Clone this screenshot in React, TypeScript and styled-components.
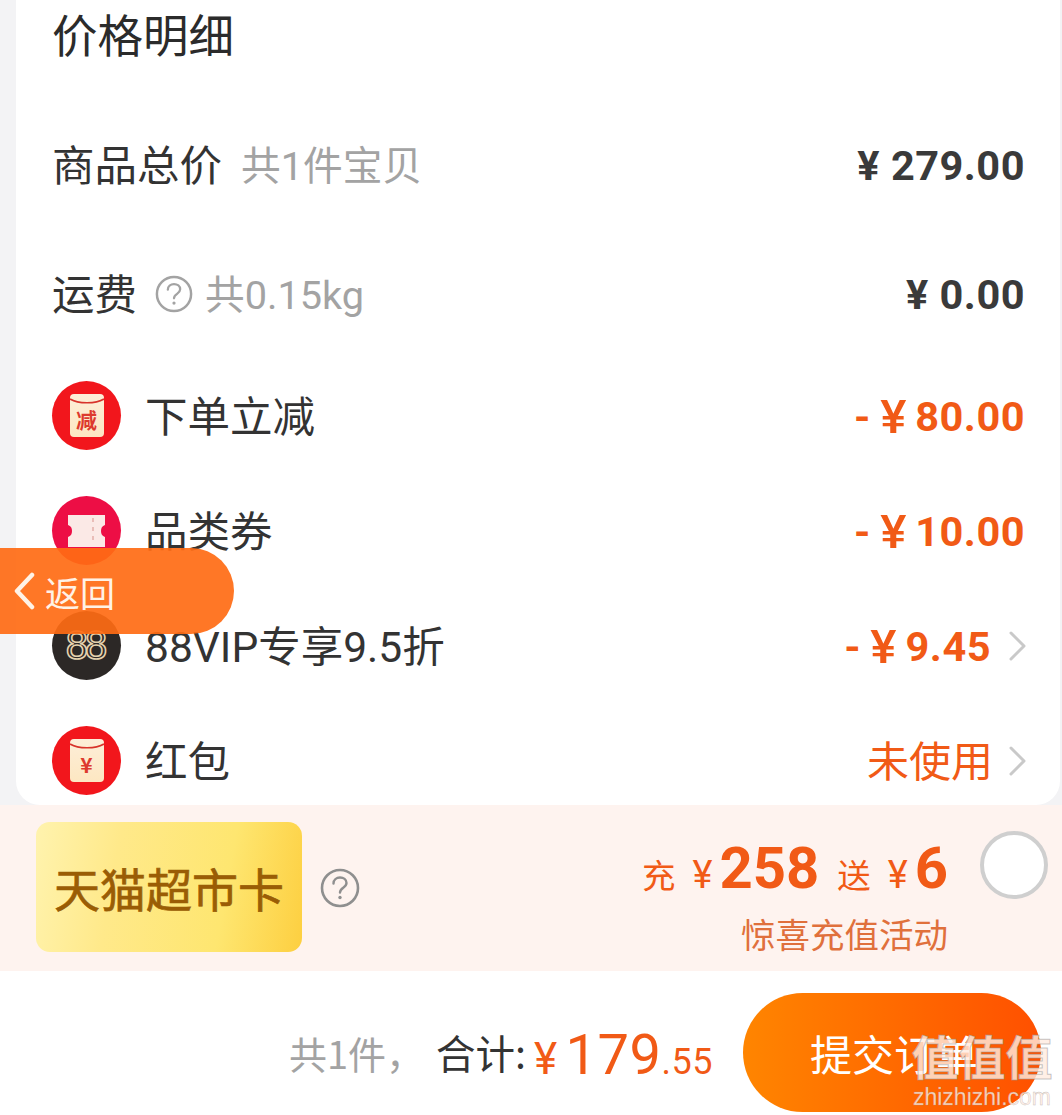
import React from 'react';
import styled, { createGlobalStyle } from 'styled-components';

const CJK = `"Noto Sans CJK SC", "Noto Sans", sans-serif`;
const NUM = `Roboto, "Noto Sans CJK SC", sans-serif`;
const ORANGE = '#f15a16';

const GlobalStyle = createGlobalStyle`
  html, body {
    margin: 0;
    padding: 0;
    background: #f3f3f5;
    font-family: ${CJK};
  }
`;

const Page = styled.div`
  position: relative;
  width: 1062px;
  height: 1115px;
  overflow: hidden;
  display: flex;
  flex-direction: column;
`;

const Card = styled.section`
  height: 805px;
  flex: none;
  margin: 0 2px 0 16px;
  padding: 0 35px 0 36px;
  box-sizing: border-box;
  overflow: hidden;
  background: #fff;
  border-radius: 0 0 24px 24px;
`;

const Title = styled.h2`
  margin: 0 0 30px;
  height: 70px;
  line-height: 66px;
  font-size: 45.5px;
  font-weight: 400;
  color: #2b2b2b;
`;

const Row = styled.div<{ $height: number }>`
  height: ${(p) => p.$height}px;
  display: flex;
  align-items: center;
`;

const Label = styled.span`
  padding-bottom: 6px;
  font-size: 42.5px;
  color: #333;
  white-space: nowrap;
`;

const IconLabel = styled(Label)`
  margin-left: 24px;
  padding-bottom: 4px;
  font-family: ${NUM};
`;

const Muted = styled.span`
  margin-left: 19px;
  padding-bottom: 6px;
  font-family: ${NUM};
  font-size: 39.7px;
  color: #a3a3a3;
  white-space: nowrap;
`;

const HelpSlot = styled.span`
  margin-left: 18px;
  margin-right: -7px;
  display: flex;
`;

const Amount = styled.span<{ $orange?: boolean }>`
  margin-left: auto;
  padding-top: ${(p) => (p.$orange ? 2 : 0)}px;
  display: flex;
  align-items: center;
  font-family: ${NUM};
  font-weight: 700;
  font-size: 41.5px;
  letter-spacing: 0.5px;
  color: ${(p) => (p.$orange ? ORANGE : '#3a3a3a')};
  white-space: nowrap;
`;

const Minus = styled.span`
  margin-right: 10px;
`;

const WideYen = styled.span`
  margin-right: 9px;
  font-size: 47px;
  font-weight: 500;
  line-height: 1;
  transform: scaleX(1.05);
`;

const Unused = styled.span`
  margin: 0 -2px 0 auto;
  padding-bottom: 4px;
  font-size: 42px;
  color: ${ORANGE};
`;

const Chevron = styled.svg`
  flex: none;
  margin: 0 -2px 0 18px;
  width: 18px;
  height: 30px;
`;

const Circle = styled.div<{ $bg: string }>`
  position: relative;
  flex: none;
  width: 69px;
  height: 69px;
  border-radius: 50%;
  background: ${(p) => p.$bg};
  display: flex;
  align-items: center;
  justify-content: center;
`;

const Envelope = styled.div`
  position: relative;
  width: 34px;
  height: 43px;
  border-radius: 4px;
  background: linear-gradient(#fdeed8, #fde7c2);
  display: flex;
  align-items: flex-end;
  justify-content: center;
  padding-bottom: 5px;
  box-sizing: border-box;
  color: #dd3a2e;
  font-size: 21px;
  font-weight: 700;
  line-height: 25px;
`;

const Flap = styled.svg`
  position: absolute;
  top: 0;
  left: 0;
  width: 34px;
  height: 13px;
`;

const VipText = styled.span`
  font-family: "Liberation Sans", sans-serif;
  font-size: 40px;
  letter-spacing: -3px;
  margin-left: -3px;
  color: transparent;
  -webkit-text-stroke: 1.6px #e6d3af;
`;

const Recharge = styled.div`
  flex: none;
  height: 166px;
  padding: 0 14px 0 36px;
  background: #fef3ef;
  display: flex;
  align-items: center;
`;

const ClubCard = styled.div`
  flex: none;
  width: 266px;
  height: 130px;
  margin-top: -2px;
  border-radius: 14px;
  background: linear-gradient(100deg, #fff3ae 0%, #ffe98a 30%, #fee670 70%, #fdcf40 100%);
  display: flex;
  align-items: center;
  justify-content: center;
  font-size: 46px;
  font-weight: 400;
  color: #9a5d05;
  -webkit-text-stroke: 0.7px #9a5d05;
  white-space: nowrap;
`;

const HelpIcon = styled.svg<{ $size: number }>`
  flex: none;
  width: ${(p) => p.$size}px;
  height: ${(p) => p.$size}px;
`;

const CardHelp = styled.div`
  margin-left: 18px;
  display: flex;
`;

const Offer = styled.div`
  margin-left: auto;
  padding-top: 12px;
  display: flex;
  flex-direction: column;
  align-items: flex-end;
  color: ${ORANGE};
`;

const OfferLine = styled.div`
  display: flex;
  align-items: baseline;
  height: 71px;
  line-height: 70px;
  font-size: 33.5px;
  white-space: nowrap;
`;

const OfferYen = styled.span`
  margin-left: 17px;
  font-size: 38px;
  font-family: ${NUM};
`;

const OfferGap = styled.span`
  margin-left: 18px;
`;

const OfferNum = styled.span`
  margin-left: 7px;
  font-family: ${NUM};
  font-size: 58px;
  font-weight: 700;
`;

const OfferNote = styled.div`
  margin-top: 6px;
  font-size: 34.5px;
  line-height: 46px;
  color: #e0703c;
`;

const Radio = styled.div`
  flex: none;
  width: 68px;
  height: 68px;
  margin: -46px 0 0 32px;
  box-sizing: border-box;
  border-radius: 50%;
  border: 4px solid #cfcfcf;
  background: #fff;
`;

const Footer = styled.div`
  flex: 1;
  background: #fff;
  padding: 22px 21px 3px 0;
  display: flex;
  align-items: center;
  justify-content: flex-end;
`;

const Count = styled.span`
  font-size: 38px;
  color: #a3a3a3;
  margin-right: 12px;
`;

const Total = styled.span`
  font-size: 39.5px;
  color: #333;
  margin-right: 8px;
  padding-bottom: 2px;
`;

const Price = styled.span`
  padding-top: 4px;
  font-family: ${NUM};
  color: ${ORANGE};
  font-size: 56px;
  letter-spacing: 0.5px;
`;

const PriceSmall = styled.span`
  font-size: 36px;
`;

const PriceYen = styled.span`
  font-size: 44px;
  margin-right: 8px;
`;

const Submit = styled.button`
  flex: none;
  width: 298px;
  height: 119px;
  margin-left: 30px;
  padding: 0 0 0 67px;
  border: 0;
  border-radius: 60px;
  background: linear-gradient(90deg, #ff8500, #ff5000);
  color: #fff;
  font-family: ${CJK};
  font-size: 42px;
  text-align: left;
  white-space: nowrap;
`;

const BackPill = styled.div`
  position: absolute;
  left: 0;
  top: 548px;
  width: 234px;
  height: 86px;
  border-radius: 0 43px 43px 0;
  background: rgba(255, 107, 20, 0.92);
  display: flex;
  align-items: center;
  padding-left: 13px;
  box-sizing: border-box;
  color: #fff2e6;
  font-size: 35px;
`;

const BackText = styled.span`
  margin-left: 10px;
`;

const Watermark = styled.div`
  position: absolute;
  left: 908px;
  top: 1026px;
  width: 148px;
  display: flex;
  flex-direction: column;
  align-items: center;
  color: rgba(255, 236, 225, 0.82);
  -webkit-text-stroke: 1px rgba(150, 150, 150, 0.55);
`;

const WatermarkGlyphs = styled.div`
  font-size: 47px;
  line-height: 58px;
  font-weight: 700;
  white-space: nowrap;
`;

const WatermarkUrl = styled.div`
  font-family: "Liberation Sans", sans-serif;
  font-size: 23px;
  line-height: 26px;
  -webkit-text-stroke: 0.4px rgba(150, 150, 150, 0.6);
`;

const Help = ({ size, color }: { size: number; color: string }) => (
  <HelpIcon $size={size} viewBox="0 0 40 40" fill="none" stroke={color}>
    <circle cx="20" cy="20" r="18" strokeWidth="2.6" />
    <path d="M13.5 15.5c0-3.8 3-6 6.5-6s6.5 2.2 6.5 5.6c0 4.8-6.5 4.6-6.5 9.4" strokeWidth="2.4" strokeLinecap="round" />
    <circle cx="20" cy="29.5" r="1.7" fill={color} stroke="none" />
  </HelpIcon>
);

const Arrow = () => (
  <Chevron viewBox="0 0 18 30" fill="none">
    <path d="M2 2l13 13L2 28" stroke="#c9c9c9" strokeWidth="3" strokeLinecap="round" strokeLinejoin="round" />
  </Chevron>
);

const RedEnvelope = ({ mark }: { mark: string }) => (
  <Circle $bg="#f2161c">
    <Envelope>
      <Flap viewBox="0 0 34 13" fill="none">
        <path d="M0 5C8 10 26 10 34 5" stroke="#d8332b" strokeWidth="1.5" />
      </Flap>
      {mark}
    </Envelope>
  </Circle>
);

const TicketIcon = () => (
  <Circle $bg="#ed0e45">
    <svg width="37" height="32" viewBox="0 0 37 32">
      <path
        d="M0 0h37v10c-3 1-4 3-4 6s1 5 4 6v10H0V22c3-1 4-3 4-6s-1-5-4-6z"
        fill="#fbe9e6"
      />
      <path d="M25 3v27" stroke="#e9bdb8" strokeWidth="2" strokeDasharray="4 5" />
    </svg>
  </Circle>
);

const Discount = ({ value }: { value: string }) => (
  <Amount $orange>
    <Minus>-</Minus>
    <WideYen>¥</WideYen>
    {value}
  </Amount>
);

export default function App() {
  return (
    <>
      <GlobalStyle />
      <Page>
        <Card>
          <Title>价格明细</Title>
          <Row $height={130}>
            <Label>商品总价</Label>
            <Muted>共1件宝贝</Muted>
            <Amount>¥ 279.00</Amount>
          </Row>
          <Row $height={128}>
            <Label>运费</Label>
            <HelpSlot>
              <Help size={38} color="#a3a3a3" />
            </HelpSlot>
            <Muted>共0.15kg</Muted>
            <Amount>¥ 0.00</Amount>
          </Row>
          <Row $height={115}>
            <RedEnvelope mark="减" />
            <IconLabel>下单立减</IconLabel>
            <Discount value="80.00" />
          </Row>
          <Row $height={115}>
            <TicketIcon />
            <IconLabel>品类券</IconLabel>
            <Discount value="10.00" />
          </Row>
          <Row $height={115}>
            <Circle $bg="#2c2826">
              <VipText>88</VipText>
            </Circle>
            <IconLabel>88VIP专享9.5折</IconLabel>
            <Discount value="9.45" />
            <Arrow />
          </Row>
          <Row $height={115}>
            <RedEnvelope mark="¥" />
            <IconLabel>红包</IconLabel>
            <Unused>未使用</Unused>
            <Arrow />
          </Row>
        </Card>

        <Recharge>
          <ClubCard>天猫超市卡</ClubCard>
          <CardHelp>
            <Help size={40} color="#8f8f8f" />
          </CardHelp>
          <Offer>
            <OfferLine>
              充<OfferYen>¥</OfferYen>
              <OfferNum>258</OfferNum>
              <OfferGap>送</OfferGap>
              <OfferYen>¥</OfferYen>
              <OfferNum>6</OfferNum>
            </OfferLine>
            <OfferNote>惊喜充值活动</OfferNote>
          </Offer>
          <Radio />
        </Recharge>

        <Footer>
          <Count>共1件，</Count>
          <Total>合计:</Total>
          <Price>
            <PriceYen>¥</PriceYen>179<PriceSmall>.55</PriceSmall>
          </Price>
          <Submit>提交订单</Submit>
        </Footer>

        <BackPill>
          <svg width="22" height="38" viewBox="0 0 22 38" fill="none">
            <path d="M19 3L4 19l15 16" stroke="#fff2e6" strokeWidth="4.5" strokeLinecap="round" strokeLinejoin="round" />
          </svg>
          <BackText>返回</BackText>
        </BackPill>

        <Watermark>
          <WatermarkGlyphs>值值值</WatermarkGlyphs>
          <WatermarkUrl>zhizhizhi.com</WatermarkUrl>
        </Watermark>
      </Page>
    </>
  );
}
